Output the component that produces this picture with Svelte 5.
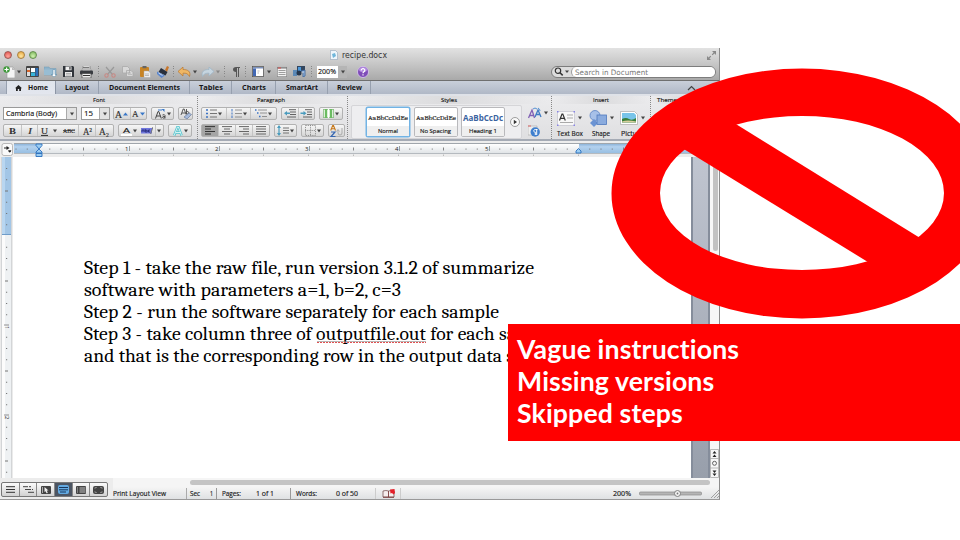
<script>
  // name: [width, height, svg markup]
  const icons = {
    newdoc: [12, 12, '<path d="M4 1h6l2 3v8H4z" fill="#f4f4f4" stroke="#999" stroke-width=".6"/><path d="M9 1v3h3" fill="#bbb"/><circle cx="3.6" cy="3.5" r="3.2" fill="#3f9a3a"/><path d="M1.5 3.5h4.2M3.6 1.4v4.2" stroke="#fff" stroke-width="1.2"/>'],
    caret: [4, 4, '<path d="M0 .6h4L2 3.6z" fill="#444"/>'],
    caretl: [4, 4, '<path d="M0 .6h4L2 3.6z" fill="#888"/>'],
    template: [13, 11, '<rect width="13" height="11" rx="1" fill="#444"/><rect x="1" y="2" width="3" height="8" fill="#ddd"/><rect x="5" y="2" width="4" height="4" fill="#fff"/><rect x="9.4" y="2" width="2.8" height="8" fill="#2d6fb8"/><rect x="5" y="6.5" width="4" height="3.5" fill="#37b4da"/><rect x="1" y="4" width="3" height="2" fill="#d9672e"/>'],
    open: [13, 11, '<path d="M0 1h5l1 1.5h6V9H0z" fill="#8fb4cb" stroke="#6f98b2" stroke-width=".5"/><path d="M0 3.5h12V9H0z" fill="#98bdd3"/><path d="M9 3.5v5H7l3 2.5 3-2.5h-2v-5z" fill="#fff" stroke="#5d8bab" stroke-width=".6"/>'],
    save: [11, 11, '<path d="M0 0h10l1 1v10H0z" fill="#30343a"/><rect x="2.5" y=".5" width="6" height="3.7" fill="#f0f0f0"/><rect x="6.3" y="1" width="1.3" height="2.6" fill="#444"/><rect x="2" y="6" width="7" height="4.5" fill="#e8e8e8"/><path d="M3 7.5h5M3 9h5" stroke="#888" stroke-width=".6"/>'],
    print: [13, 12, '<path d="M3 0h7l1 5H2z" fill="#fff" stroke="#777" stroke-width=".6"/><path d="M3 1.5h6.500M3 3h7" stroke="#555" stroke-width=".8"/><rect y="4.500" width="13" height="4" rx="1" fill="#383b40"/><path d="M2 7.500h9V12H2z" fill="#eee" stroke="#444" stroke-width=".7"/><path d="M3 9.500h7" stroke="#333"/>'],
    cut: [12, 12, '<path d="M2 1l6.500 7.500M10 1L3.500 8.500" stroke="#999" stroke-width="1.2"/><circle cx="2.5" cy="9.5" r="1.7" fill="none" stroke="#c88984" stroke-width="1.1"/><circle cx="9.5" cy="9.500" r="1.7" fill="none" stroke="#c88984" stroke-width="1.1"/>'],
    copy: [12, 11, '<path d="M.5.5h5l2 2V7h-7zM4.500 4.500h4.500l2 2v4H4.500z" fill="#d8d8d8" stroke="#aaa" stroke-width=".8"/><path d="M6 7h3M6 8.500h4" stroke="#aaa" stroke-width=".6"/>'],
    paste: [11, 12, '<rect y="1" width="9" height="10" rx="1" fill="#c88425"/><rect x="2.500" width="4" height="2.200" fill="#666"/><path d="M4 5h4.500l2 2v4.500H4z" fill="#eee" stroke="#aaa" stroke-width=".5"/><path d="M5 8h4M5 9.500h4" stroke="#999" stroke-width=".6"/>'],
    brush: [12, 12, '<path d="M8 4l2-4 2 1-2 5z" fill="#c7762b"/><path d="M4 2l6.500 4-2 3.500-7-3.500z" fill="#29303d"/><path d="M0 5.500l8 4-3.500 2.500L0 8z" fill="#5b86cc"/><path d="M1.500 7l4 2.500" stroke="#d8e5fb" stroke-width=".9"/>'],
    undo: [13, 10, '<path d="M0 4.500L5 0v2.500c5 0 8 2 6.500 7C10 6.500 8 6 5 6.200V9z" fill="#efb765" stroke="#b9772e" stroke-width=".7"/>'],
    redo: [13, 10, '<path d="M13 4.500L8 0v2.500c-5 0-8 2-6.500 7C3 6.500 5 6 8 6.200V9z" fill="#c6d5df" stroke="#9fb6c6" stroke-width=".8"/>'],
    pilcrow: [7, 10, '<path d="M3 0h4v1H6v9H5V1H4v9H3V5C-1 5-1 0 3 0z" fill="#555"/>'],
    sidebar: [12, 11, '<rect x=".4" y=".4" width="11.200" height="10.200" fill="#fff" stroke="#555" stroke-width=".8"/><path d="M1 1h10v1.500H1z" fill="#7e92ba"/><path d="M1 2.500h3V10H1z" fill="#4268b4"/><path d="M5.500 5h2M5.500 7h1.500" stroke="#bbb"/>'],
    toolbox: [10, 11, '<rect x=".3" y="1.300" width="9.400" height="9.400" fill="#f2f2f2" stroke="#888" stroke-width=".7"/><path d="M0 2h10" stroke="#777"/><path d="M1.500 4.500h7M1.500 6.500h7M1.500 8.500h7" stroke="#888" stroke-width=".8"/><path d="M1 2h3" stroke="#d44"/>'],
    gallery: [13, 11, '<path d="M0 4h4v6H0z" fill="#5b89b7"/><path d="M4 0h8v6H4z" fill="#33465e"/><path d="M5 1h3v4H5z" fill="#4d98d9"/><circle cx="6" cy="7" r="2.500" fill="#27374d"/><path d="M8 5l4-1v6l-2 1V7" fill="#9db9dc" stroke="#335f9a" stroke-width=".8"/>'],
    help: [12, 12, '<circle cx="6" cy="6" r="5.500" fill="#7e4bb8" stroke="#dccdf0" stroke-width=".8"/><ellipse cx="6" cy="3.600" rx="4" ry="2.600" fill="#b28ae0"/><path d="M4.200 4.500C4.200 2 8 2.200 7.800 4.500 7.500 5.800 6 5.700 6 7.200M6 8.300v1.200" stroke="#fff" fill="none" stroke-width="1.200"/>'],
    house: [7, 6, '<path d="M3.500 0L7 3.300H6V6H4.200V4H2.800v2H1V3.300H0z" fill="#222"/>'],
    grow: [5, 4, '<path d="M0 3.500L2.500.5 5 3.500z" fill="#3a78c8"/>'],
    shrink: [5, 4, '<path d="M0 .5L2.500 3.500 5 .5z" fill="#3a78c8"/>'],
    eraser: [12, 11, '<path d="M1 7L3.200 1h1L6 6.500M2 5h3.200M6.500 1v5c3 .5 3-3 .3-2.500" fill="none" stroke="#333" stroke-width=".8"/><path d="M4 9l5-4 2.500 1.500L7 11z" fill="#a7bbdc" stroke="#5d6f92" stroke-width=".6"/>'],
    case: [11, 10, '<path d="M.5 9.500L3 2.500h.8L6.300 9.500M1.500 7h3.800" fill="none" stroke="#444" stroke-width="1"/><path d="M7.500 6q2.300-1 2.500.5v3M10 7.500q-2.800-.2-2.500 1.100.8 1.200 2.500 0" fill="none" stroke="#444" stroke-width=".9"/><path d="M3 1h4" fill="none" stroke="#3a78c8" stroke-width="1"/><path d="M6.500 0h3v3z" fill="#3a78c8"/>'],
    highlight: [12, 8, '<rect y="1" width="11" height="5.500" fill="#7077dd"/><path d="M1 5V3h2v2M4.200 2v3h2V3.300h-2M9 3H7.500v2H9" stroke="#20246e" fill="none" stroke-width=".8"/><path d="M9.500 7L12 0" stroke="#777" stroke-width="1"/>'],
    glow: [10, 10, '<path d="M1.200 9.500L4.400 1h1l3.200 8.500M2.800 6.500h4.400" stroke="#50c3cc" stroke-width="2.400" fill="none"/><path d="M1.200 9.500L4.400 1h1l3.200 8.500M2.800 6.500h4.400" stroke="#f4ffff" stroke-width=".8" fill="none"/>'],
    bullets: [11, 9, '<path d="M0 1h2M0 4.500h2M0 8h2" stroke="#3d73c4" stroke-width="1.500"/><path d="M4 1h7M4 4.500h7M4 8h7" stroke="#666" stroke-width=".9"/>'],
    numbers: [11, 9, '<path d="M1 0v2.500M1 3.500v2M1 6.500v2.500" stroke="#3d73c4"/><path d="M4 1h7M4 4.500h7M4 8h7" stroke="#888" stroke-width=".9"/>'],
    multi: [12, 9, '<path d="M0 1h1.500M2 4h1.500M4 7.500h1.500" stroke="#3d73c4" stroke-width="1.500"/><path d="M3 1h9M5 4h7M7 7.500h5" stroke="#888" stroke-width=".9"/>'],
    outdent: [12, 9, '<path d="M5 .7h7M6 3h6M6 5.500h6M3 8h9" stroke="#555" stroke-width=".9"/><path d="M0 4.300L3 2v1.500h3v1.600H3v1.500z" fill="#4a9bbd"/>'],
    indent: [12, 9, '<path d="M5 .7h7M7 3h5M7 5.500h5M3 8h9" stroke="#555" stroke-width=".9"/><path d="M6.500 4.300L3.500 2v1.500h-3v1.600h3v1.500z" fill="#4a9bbd"/>'],
    columns: [11, 9, '<rect x=".4" y=".4" width="10.200" height="8.200" fill="#eaf6e7" stroke="#8bbd86" stroke-width=".8"/><path d="M3 0v9M8 0v9" stroke="#6cbc62" stroke-width="2.200"/><path d="M5.500 0v9" stroke="#fff"/>'],
    left: [10, 9, '<path d="M0 .6h10M0 3h6M0 5.500h10M0 8h6" stroke="#333" stroke-width="1"/>'],
    center: [10, 9, '<path d="M0 .6h10M2 3h6M0 5.500h10M2 8h6" stroke="#666" stroke-width="1"/>'],
    right: [10, 9, '<path d="M0 .6h10M4 3h6M0 5.500h10M4 8h6" stroke="#666" stroke-width="1"/>'],
    justify: [10, 9, '<path d="M0 .6h10M0 3h10M0 5.500h10M0 8h10" stroke="#666" stroke-width="1"/>'],
    spacing: [12, 11, '<path d="M2 1v9" stroke="#4a9bbd" stroke-width="1.200"/><path d="M0 3l2-3 2 3zM0 8l2 3 2-3z" fill="#4a9bbd"/><path d="M6 3h6M6 5.500h6M6 8h6" stroke="#666" stroke-width=".9"/>'],
    borders: [11, 11, '<path d="M.5.5h10v10H.5zM5.500 0v11M0 5.500h11" fill="none" stroke="#888" stroke-width=".9" stroke-dasharray="1.200 1"/>'],
    sort: [13, 12, '<path d="M.7 5.500L2.800.3h.6L5.500 5.500M1.500 3.800H4.800" fill="none" stroke="#c77819" stroke-width="1.100"/><path d="M1 7h4L1 11.500h4.500" fill="none" stroke="#3565b0" stroke-width="1.200"/><path d="M8 5v3a2 2 0 004 0V3M6.500 6.500L8 4.500 9.500 6.500" fill="none" stroke="#aaa" stroke-width="1"/>'],
    play: [10, 10, '<circle cx="5" cy="5" r="4.500" fill="#fafafa" stroke="#888" stroke-width=".8"/><path d="M3.800 2.800L7 5 3.800 7.200z" fill="#333"/>'],
    aa: [14, 12, '<path d="M.5 11L4 3l2.500 8M2 8.500h4" stroke="#8161b5" stroke-width="1.300" fill="none"/><path d="M7 10l3-7 3 7M8 7.500h4" stroke="#3f7cc4" stroke-width="1.300" fill="none"/><path d="M5 2q2-2 4 0M10 1q2 1 2 3" stroke="#5492d4" fill="none"/>'],
    stylepane: [12, 12, '<path d="M0 1h9v9H0z" fill="#eee" stroke="#aaa" stroke-width=".6"/><path d="M0 1h3" stroke="#d66" stroke-width="1"/><circle cx="7.200" cy="7" r="4.700" fill="#3f7fce"/><path d="M9.500 4.500H7.300C5.200 4.500 5.200 7.200 7.300 7.200V10M8.700 4.500V10" stroke="#fff" stroke-width="1" fill="none"/>'],
    textbox: [18, 15, '<rect x=".5" y=".5" width="17" height="14" fill="#f8f8f8" stroke="#c4c4cc" stroke-width=".7"/><path d="M2.500 9.500L5 3h.8l2.500 6.500M3.500 7.300h4" fill="none" stroke="#333" stroke-width="1.200"/><path d="M10 4h6M10 7h6M3 11.500h13" stroke="#aaa" stroke-width="1"/><path d="M0 0h1.500v1.500H0zM16.500 0H18v1.500h-1.500zM0 13.500h1.500V15H0zM16.500 13.500H18V15h-1.500z" fill="#8a85e8"/>'],
    shape: [18, 17, '<circle cx="6" cy="5.500" r="5" fill="#a7c0e8" stroke="#5c83c4" stroke-width=".8"/><path d="M5 9l4 4-4 4-4-4z" fill="#6b93d3"/><rect x="8" y="5" width="9.500" height="9.500" fill="#8aabde" stroke="#4f79be" stroke-width=".8"/>'],
    picture: [18, 14, '<path d="M.5.5h14l3 3v10H.5z" fill="#fff" stroke="#aaa" stroke-width=".7"/><path d="M2 2h12l2 2v7.500H2z" fill="#78c4e9"/><path d="M2 8q4-2 7 0t7-1v4.500H2z" fill="#3a7f3b"/><path d="M2 10.500q5-2 14 0v1H2z" fill="#d9cf9d"/>'],
    outline: [11, 7, '<path d="M0 .7h5M2 3.500h6M5 6.300h6M6 .7h2M9 3.500h1" stroke="#444" stroke-width="1"/>'],
    draft: [9, 7, '<path d="M0 .7h9M0 3.500h9M0 6.300h9" stroke="#333" stroke-width="1"/>'],
    publish: [10, 8, '<rect width="10" height="8" rx="1" fill="#444"/><path d="M3.500 1l4 3.500H5.800L6.800 7 5.500 7.300 4.700 5.200 3.500 6z" fill="#eee"/><path d="M1.500 1v6" stroke="#aaa"/>'],
    printview: [11, 9, '<rect width="11" height="9" rx="2" fill="#63aae2"/><path d="M1 2.500h9M1 4.800h9M2 7h6" stroke="#17375e" stroke-width="1"/>'],
    notebook: [10, 8, '<rect width="10" height="8" rx="1" fill="#444"/><path d="M3.500 2h6M3.500 4h6M3.500 6h6M1 2h1M1 4h1M1 6h1" stroke="#ddd" stroke-width=".8"/>'],
    full: [11, 8, '<rect width="11" height="8" rx="2" fill="#444"/><path d="M2 3V1.500h2M9 3V1.500H7M2 5v1.500h2M9 5v1.500H7" stroke="#bbb" fill="none" stroke-width=".5"/>'],
    book: [13, 9, '<path d="M1 2q3-1 5.500 0Q9 1 12 2v6H1z" fill="#f6eeee" stroke="#7a5454" stroke-width=".8"/><path d="M6.500 2v6M1 8.300h11" stroke="#7a3a3a" stroke-width=".9"/><path d="M8 .5l4.500-.5.5 4-1.500 1.500-1.500-1.500-1.500.5z" fill="#e3202a"/>'],
    search: [16, 9, '<circle cx="4" cy="3.700" r="2.700" fill="none" stroke="#333" stroke-width="1.200"/><path d="M6 5.700l2.700 2.700" stroke="#333" stroke-width="1.500"/><path d="M11 3.500h4L13 6z" fill="#444"/>'],
    expand: [9, 9, '<path d="M5 0h4v4zM0 5v4h4z" fill="#888"/><path d="M8 1L5.200 3.800M1 8l2.800-2.800" stroke="#888" stroke-width="1.200"/>'],
    docfile: [8, 10, '<path d="M.4.4h5l2.200 2.200v7H.4z" fill="#eef6fb" stroke="#9ab" stroke-width=".7"/><path d="M2 4l3-1 1 3-3 2z" fill="#6fb6da"/>']
  };

  // gap before the item, then what it is
  const toolbar = [
    [3, 'newdoc'], [2, 'caret'], [5, 'template'], [5, 'open'], [6, 'save'], [6, 'print'], [5, '|'],
    [4, 'cut'], [6, 'copy'], [6, 'paste'], [6, 'brush'], [4, '|'], [3, 'undo'], [2, 'caret'],
    [4, 'redo'], [2, 'caretl'], [4, '|'], [7, 'pilcrow'], [5, '|'], [5, 'sidebar'], [3, 'caret'],
    [6, 'toolbox'], [6, 'gallery'], [5, '|']
  ];
  const tabs = [
    ['Layout', 43, 24], ['Document Elements', 91, 71], ['Tables', 42, 24],
    ['Charts', 44, 24], ['SmartArt', 52, 32], ['Review', 43, 25]
  ];
  const steps = [
    ['Step 1 - take the raw file, run version 3.1.2 of summarize', 450],
    ['software with parameters a=1, b=2, c=3', 317],
    ['Step 2 - run the software separately for each sample', 415],
    ['Step 3 - take column three of outputfile.out for each sample', 472],
    ['and that is the corresponding row in the output data set', 445]
  ];
  const notes = ['Vague instructions', 'Missing versions', 'Skipped steps'];
  const views = ['draft', 'outline', 'publish', 'printview', 'notebook', 'full'];
  const ticks = Array.from({ length: 58 }, (_, i) => i - 2);
  const vticks = Array.from({ length: 29 }, (_, i) => i - 6);
</script>

{#snippet ic(name)}
  <svg class="ic" width={icons[name][0]} height={icons[name][1]} viewBox="0 0 {icons[name][0]} {icons[name][1]}">{@html icons[name][2]}</svg>
{/snippet}

{#snippet t(text, w, size = 7, cls = '')}
  <svg class="t {cls}" width={w} height={size + 2}><text x="0" y={size} font-size={size} textLength={w} lengthAdjust="spacingAndGlyphs">{text}</text></svg>
{/snippet}

<main>
  <section class="window">
    <header>
      <div class="title">
        <i class="light red"></i><i class="light amber"></i><i class="light green"></i>
        <span class="name">{@render ic('docfile')}{@render t('recipe.docx', 45, 8, 'grey')}</span>
        <span class="expand">{@render ic('expand')}</span>
      </div>
      <div class="tools">
        {#each toolbar as [gap, name]}
          <span class="tool" style="margin-left:{gap}px">
            {#if name === '|'}<i class="dots"></i>{:else}{@render ic(name)}{/if}
          </span>
        {/each}
        <span class="zoom"><b>{@render t('200%', 18, 7)}</b><span>{@render ic('caret')}</span></span>
        <span class="help">{@render ic('help')}</span>
        <span class="search">{@render ic('search')}<span class="field">{@render t('Search in Document', 73, 7.5, 'soft')}</span></span>
      </div>
    </header>

    <nav>
      <span class="home">{@render ic('house')}{@render t('Home', 20, 7, 'bold')}</span>
      {#each tabs as [label, w, tw]}
        <span class="tab" style="width:{w}px">{@render t(label, tw, 7, 'bold')}</span>
      {/each}
      <svg class="chev" width="10" height="6"><path d="M1 5l3.500-3.500L8 5" fill="none" stroke="#444" stroke-width="1.200" /></svg>
    </nav>

    <div class="ribbon">
      <div class="group font">
        <div class="gtitle">{@render t('Font', 12, 6)}</div>
        <div class="row">
          <span class="combo face"><b>{@render t('Cambria (Body)', 51, 7)}</b><span>{@render ic('caret')}</span></span>
          <span class="combo size"><b>{@render t('15', 9, 7)}</b><span>{@render ic('caret')}</span></span>
          <span class="btns w34"><span>{@render t('A', 7, 10, 'serif')}{@render ic('grow')}</span><span class="sep">{@render t('A', 6.5, 9, 'serif')}{@render ic('shrink')}</span></span>
          <span class="btns w23"><span>{@render ic('case')}{@render ic('caret')}</span></span>
          <span class="btns w14"><span>{@render ic('eraser')}</span></span>
        </div>
        <div class="row">
          <span class="btns w110">
            <span class="c17">{@render t('B', 7, 9, 'serif bold')}</span>
            <span class="c16 sep">{@render t('I', 4, 9, 'serif ital')}</span>
            <span class="c23 u sep">{@render t('U', 7, 9, 'serif under')}{@render ic('caret')}</span>
            <span class="c18">{@render t('ABC', 12, 6.5, 'serif strike')}</span>
            <span class="c17 sep">{@render t('A²', 9, 10, 'serif')}</span>
            <span class="c17 sep">{@render t('A₂', 10, 10, 'serif')}</span>
          </span>
          <span class="btns w46"><span class="swatch">{@render t('A', 7, 8)}</span><span>{@render ic('caret')}</span><span>{@render ic('highlight')}</span><span class="sep">{@render ic('caret')}</span></span>
          <span class="btns w24"><span>{@render ic('glow')}{@render ic('caret')}</span></span>
        </div>
      </div>

      <div class="group para">
        <div class="gtitle">{@render t('Paragraph', 28, 6)}</div>
        <div class="row">
          <span class="btns w76"><span>{@render ic('bullets')}{@render ic('caret')}</span><span class="sep">{@render ic('numbers')}{@render ic('caret')}</span><span class="sep">{@render ic('multi')}{@render ic('caret')}</span></span>
          <span class="btns w34"><span>{@render ic('outdent')}</span><span class="sep">{@render ic('indent')}</span></span>
          <span class="btns w24"><span>{@render ic('columns')}{@render ic('caret')}</span></span>
        </div>
        <div class="row">
          <span class="btns w69"><span class="on">{@render ic('left')}</span><span class="sep">{@render ic('center')}</span><span class="sep">{@render ic('right')}</span><span class="sep">{@render ic('justify')}</span></span>
          <span class="btns w23"><span>{@render ic('spacing')}{@render ic('caret')}</span></span>
          <span class="btns w23"><span>{@render ic('borders')}{@render ic('caret')}</span></span>
          <span class="btns w17"><span>{@render ic('sort')}</span></span>
        </div>
      </div>

      <div class="group styles">
        <div class="gtitle">{@render t('Styles', 16, 6)}</div>
        <div class="stylerow">
          <div class="gallery">
            <div class="cell sel"><b>{@render t('AaBbCcDdEe', 40, 7, 'cambria')}</b><span>{@render t('Normal', 20, 6)}</span></div>
            <div class="cell"><b>{@render t('AaBbCcDdEe', 40, 7, 'cambria')}</b><span>{@render t('No Spacing', 31, 6)}</span></div>
            <div class="cell h"><b>{@render t('AaBbCcDc', 40, 8.5, 'blue bold')}</b><span>{@render t('Heading 1', 28, 6)}</span></div>
            {@render ic('play')}
          </div>
          <div class="side"><span>{@render ic('aa')}{@render ic('caret')}</span>{@render ic('stylepane')}</div>
        </div>
      </div>

      <div class="group insert">
        <div class="gtitle">{@render t('Insert', 16, 6)}</div>
        <div class="bigs">
          <div class="big"><span>{@render ic('textbox')}{@render ic('caret')}</span>{@render t('Text Box', 26, 6.5)}</div>
          <div class="big"><span>{@render ic('shape')}{@render ic('caret')}</span>{@render t('Shape', 18, 6.5)}</div>
          <div class="big"><span>{@render ic('picture')}{@render ic('caret')}</span>{@render t('Picture', 23, 6.5)}</div>
        </div>
      </div>
      <div class="group themes"><div class="gtitle">{@render t('Themes', 23, 6)}</div></div>
    </div>

    <svg class="ruler" width="719" height="16">
      <defs>
        <linearGradient id="rb" x2="0" y2="1"><stop stop-color="#8db4da" /><stop offset=".3" stop-color="#b3d1ee" /><stop offset="1" stop-color="#98bfe2" /></linearGradient>
        <linearGradient id="rw" x2="0" y2="1"><stop stop-color="#fff" /><stop offset="1" stop-color="#dfe3e6" /></linearGradient>
      </defs>
      <rect width="719" height="16" fill="#ededed" />
      <rect x="14" y="3" width="678" height="9.500" fill="url(#rw)" />
      <path d="M14 2.500h678" stroke="#a0a6ac" /><path d="M14 12.500h678" stroke="#b5babf" />
      <rect x="14" y="3" width="25" height="9" fill="url(#rb)" />
      <rect x="579" y="3" width="112" height="9" fill="url(#rb)" />
      {#each ticks as i}
        {#if i % 8 === 0 && i > 0 && i < 48}
          <text x={35 + i * 11.25} y="10" font-size="6">{i / 8}</text>
          <path d="M{39.500 + i * 11.25} 5v5" stroke="#777" stroke-width=".7" />
        {:else if i !== 0 && i !== 48}
          <path d="M{38.500 + i * 11.25} {i % 4 ? 7.500 : 6.500}v{i % 4 ? 1.200 : 3}" stroke="#777" stroke-width=".9" />
        {/if}
        {#if i > 0 && i % 4 === 0}<path d="M{38.500 + i * 11.25} 13.500v1.500" stroke="#bbb" />{/if}
      {/each}
      <rect x="2" y="2.500" width="10.500" height="12" rx="2" fill="#fafafa" stroke="#aaa" stroke-width=".8" />
      <path d="M4 7h4M8.500 10h2.500" fill="none" stroke="#222" stroke-width="1" /><path d="M6.500 5l3 2-3 2zM8 9.500h3.500l-1.700 2.200z" fill="#222" />
      <path d="M36 3h6v1.500L39 8l-3-3.500zM36 11L39 8l3 3v1h-6zM36 12.500h6v3h-6z" fill="#9bcdf3" stroke="#2b6fbd" stroke-width=".9" />
      <path d="M576 12V10L578.500 7.500 581 10v2z" fill="#9bcdf3" stroke="#2b6fbd" stroke-width=".9" />
    </svg>

    <div class="body">
      <svg class="vruler" width="13" height="321">
        <rect width="13" height="321" fill="#ebebeb" />
        <rect x="2" width="9" height="321" fill="#eef1f3" /><rect x="2" width="3" height="321" fill="#fcfcfc" />
        <rect x="2" width="9" height="77" fill="#a3c6e6" /><rect x="2" width="3" height="77" fill="#b9d6f0" />
        <path d="M2 77.500h9" stroke="#6e9cc9" /><path d="M1.500 0v321M11.500 0v321" stroke="#c2c6ca" stroke-width=".6" />
        {#each vticks as i}
          {#if i % 8 === 0 && i > 0}
            <text transform="translate(4.500 {79 + i * 11.25}) rotate(90)" font-size="6">{i / 8}</text>
            <path d="M4 {78 + i * 11.25}h5" stroke="#777" stroke-width=".8" />
          {:else if i !== 0}
            <path d="M{i % 4 ? 6 : 5} {79 + i * 11.25}h{i % 4 ? 1.200 : 3}" stroke="#777" stroke-width="1" />
          {/if}
        {/each}
      </svg>
      <article>
        {#each steps as [line, w], i}
          <div class="line">
            <svg width={w} height="22"><text x="0" y="17" font-size="19.5" textLength={w} lengthAdjust="spacingAndGlyphs">{line}</text>
              {#if i === 3}<path d="M233 19.500h109" stroke="#e05050" stroke-width="1.200" stroke-dasharray="2 1" /><path d="M233 18.500h109" stroke="#888" stroke-width=".6" />{/if}
            </svg>
          </div>
        {/each}
      </article>
      <div class="desk"></div>
      <div class="vscroll">
        <i class="thumb"></i>
        <svg class="nav" width="9" height="29"><path d="M.5.5h8v28h-8zM0 9.500h9M0 19h9" fill="#f6f6f6" stroke="#aaa" stroke-width=".8" /><path d="M2.500 4.500l2-2.500 2 2.500zM2.500 8l2-2.500 2 2.500zM2.500 21.500l2 2.500 2-2.500zM2.500 24.500l2 2.500 2-2.500z" fill="#222" /><circle cx="4.500" cy="14.300" r="2" fill="none" stroke="#555" stroke-width=".9" /></svg>
      </div>
    </div>

    <footer>
      <div class="views">
        {#each views as v}<span class:active={v === 'printview'}>{@render ic(v)}</span>{/each}
      </div>
      <div class="bottom">
        <div class="hscroll"><i></i></div>
        <div class="status">
          <span class="s1">{@render t('Print Layout View', 53, 6.5)}</span>
          <span class="s2">{@render t('Sec', 10, 6.5)}{@render t('1', 3, 6.5)}</span>
          <span class="s3">{@render t('Pages:', 19, 6.5)}{@render t('1 of 1', 18, 6.5)}</span>
          <span class="s4">{@render t('Words:', 21, 6.5)}{@render t('0 of 50', 22, 6.5)}</span>
          <span class="s5">{@render ic('book')}</span>
          <span class="s6">{@render t('200%', 18, 6.5)}
            <svg width="63" height="9"><rect x=".5" y="3" width="62" height="3" rx="1" fill="#b5b5b5" stroke="#8b8b8b" stroke-width=".7" /><circle cx="38.500" cy="4.500" r="3" fill="#f3f3f3" stroke="#777" stroke-width=".9" /><circle cx="38.500" cy="4.500" r=".9" fill="#777" /></svg>
            <svg width="9" height="9"><path d="M1 9l8-8M4 9l5-5M7 9l2-2" stroke="#999" stroke-width=".9" /></svg>
          </span>
        </div>
      </div>
    </footer>
  </section>

  <svg class="ban" width="960" height="540">
    <path fill="#f00" fill-rule="evenodd" d="M611.500 193.500a190.500 125 0 10381 0a190.500 125 0 10-381 0zM660 193a142 77 0 11284 0a142 77 0 11-284 0z" />
    <path fill="#f00" d="M724.500 117L937.500 248.700 880 269.400 667 138.700z" />
  </svg>

  <aside>
    {#each notes as note}<p>{note}</p>{/each}
  </aside>
</main>

<style>
  :global(body) { margin: 0; background: #fff; }
  main { position: relative; width: 960px; height: 540px; overflow: hidden; background: #fff; box-sizing: border-box; padding-top: 48px; font-family: 'DejaVu Sans', sans-serif; }
  svg { display: block; flex: none; }
  b { font-weight: 400; }
  .t { overflow: visible; fill: #161616; font-family: 'Open Sans', 'Noto Sans', sans-serif; stroke: #161616; stroke-width: .15px; }
  .t.bold { font-weight: 700; stroke: none; }
  .t.grey { fill: #333; stroke: none; font-family: 'DejaVu Sans', sans-serif; }
  .t.soft { fill: #777; stroke: none; font-family: 'DejaVu Sans', sans-serif; }
  .t.serif { font-family: 'Liberation Serif', serif; fill: #333; }
  .t.cambria { font-family: Cambria, Caladea, 'Liberation Serif', serif; fill: #333; }
  .t.blue { fill: #3b639f; }
  .ital { font-style: italic; }
  .under { text-decoration: underline; }
  .strike { text-decoration: line-through; }
  .window { width: 720px; height: 452px; display: flex; flex-direction: column; box-sizing: border-box; border-right: 1px solid #8c8c8c; border-bottom: 1px solid #999; overflow: hidden; }

  header { height: 33px; box-sizing: border-box; flex: none; background: linear-gradient(#e2e2e2, #c9c9c9 45%, #a9a9a9); border-bottom: 1px solid #6f6f6f; }
  .title { height: 14px; display: flex; align-items: center; padding-left: 4px; }
  .light { width: 8px; height: 8px; border-radius: 50%; margin-right: 4.5px; box-sizing: border-box; border: 1px solid #9c5a55; }
  .red { background: radial-gradient(circle at 50% 70%, #ffa59c, #de4b45); }
  .amber { background: radial-gradient(circle at 50% 70%, #ffe6a0, #e5a034); border-color: #a98142; }
  .green { background: radial-gradient(circle at 50% 70%, #d0f0b0, #75b355); border-color: #65904f; }
  .name { display: flex; align-items: center; gap: 4px; margin-left: 288.5px; }
  .expand { margin-left: auto; padding-right: 3px; }
  .tools { height: 19px; display: flex; align-items: center; }
  .tool { display: flex; }
  .dots { width: 1px; height: 12px; margin-right: 1px; background: repeating-linear-gradient(#888 0 1px, transparent 1px 2.5px); }
  .zoom { display: flex; align-items: center; width: 30px; height: 12px; margin-left: 4px; background: #fff; }
  .zoom b { width: 20px; padding-left: 1px; }
  .zoom span { width: 9px; height: 12px; background: #b5b5b5; display: flex; align-items: center; justify-content: center; }
  .help { margin-left: 10px; }
  .search { margin-left: auto; margin-right: 3px; width: 165px; height: 12px; box-sizing: border-box; border: 1px solid #7d7d7d; border-radius: 6px; display: flex; align-items: center; background: #ddd; padding-left: 2px; }
  .field { flex: 1; height: 10px; margin-left: 1px; padding-left: 3px; border-radius: 5px; background: #fff; display: flex; align-items: center; border-left: 1px solid #999; }

  nav { height: 13px; flex: none; display: flex; align-items: center; background: linear-gradient(#c9cfda, #b0b8c6); border-bottom: 2px solid #dfe2e8; padding-left: 6px; }
  .home { width: 50px; height: 13px; display: flex; align-items: center; gap: 6px; padding-left: 8px; box-sizing: border-box; background: linear-gradient(#dfe4ec, #e3e6ee); border-left: 1px solid #97a0af; border-right: 1px solid #8c95a5; }
  .tab { height: 13px; display: flex; align-items: center; justify-content: center; box-sizing: border-box; border-right: 1px solid #97a0af; }
  .chev { margin-left: auto; margin-right: 22px; }

  .ribbon { height: 43px; flex: none; display: flex; background: linear-gradient(#ececee, #dfdfe1); border-bottom: 2px solid #a5abb5; }
  .group { box-sizing: border-box; border-right: 1px dotted #888; }
  .gtitle { height: 8px; display: flex; justify-content: center; align-items: center; margin-bottom: 3px; background: linear-gradient(90deg, transparent, #dcdcde 50%, transparent); }
  .font { width: 198px; padding-left: 3px; }
  .font .gtitle { width: 191px; }
  .para { width: 150px; padding-left: 3px; }
  .para .gtitle { width: 140px; }
  .styles { width: 204px; }
  .styles .gtitle { margin: 0 0 1px; width: 201px; }
  .insert { width: 99px; }
  .themes { flex: 1; border: none; }
  .themes .gtitle { justify-content: flex-start; padding-left: 6px; }
  .row { display: flex; gap: 4px; height: 13px; margin-bottom: 4px; }
  .combo { display: flex; align-items: center; box-sizing: border-box; border: 1px solid #9a9a9a; background: #fff; }
  .combo b { flex: 1; padding-left: 1.5px; }
  .combo > span { width: 9px; height: 11px; background: #e2e2e2; border-left: 1px solid #aaa; display: flex; align-items: center; justify-content: center; }
  .face { width: 74px; }
  .size { width: 29px; margin-right: -1px; }
  .btns { display: flex; box-sizing: border-box; border: 1px solid #b2b2b2; border-radius: 2px; background: linear-gradient(#f6f6f6, #d5d5d5); }
  .btns > span { flex: 1 0 auto; display: flex; align-items: center; justify-content: center; gap: 1px; box-sizing: border-box; }
  .btns .sep { border-left: 1px solid #c4c4c4; }
  .btns .u { gap: 5px; }
  .btns .on { background: #a5a5a5; }
  .btns > .c16 { flex: 0 0 16px; } .btns > .c17 { flex: 0 0 17px; } .btns > .c18 { flex: 0 0 18px; } .btns > .c23 { flex: 0 0 23px; }
  .btns > .swatch { height: 11px; margin-left: 2px; border-bottom: 2px solid #fff; }
  .w110 { width: 111px; } .w76 { width: 76px; } .w69 { width: 69px; } .w46 { width: 46px; }
  .w34 { width: 34px; } .w24 { width: 24px; } .w23 { width: 23px; } .w17 { width: 17px; } .w14 { width: 15px; }
  .stylerow { display: flex; }
  .gallery { width: 171px; height: 34px; margin-left: 3px; box-sizing: border-box; padding-left: 14px; display: flex; align-items: center; gap: 3.5px; background: #eeeef0; border: 1px solid #d5d5d8; border-radius: 2px; }
  .gallery > .ic { margin-left: 1px; }
  .cell { width: 44px; height: 30px; box-sizing: border-box; border: 1px solid #b9b9bc; border-radius: 2px; background: #fff; display: flex; flex-direction: column; }
  .cell.sel { border-color: #72b3e4; box-shadow: 0 0 0 .5px #72b3e4; }
  .cell b { height: 18px; display: flex; align-items: center; justify-content: center; }
  .cell span { flex: 1; display: flex; justify-content: center; align-items: center; background: #efefef; }
  .side { display: flex; flex-direction: column; gap: 6px; padding: 2px 0 0 6px; }
  .side span { display: flex; align-items: center; gap: 2px; }
  .bigs { display: flex; padding-left: 2px; }
  .big { width: 31.5px; display: flex; flex-direction: column; align-items: center; gap: 0; }
  .big span { height: 22px; display: flex; align-items: center; gap: 3px; }
  .ruler { font-family: 'Open Sans', sans-serif; fill: #222; }
  .vruler { font-family: 'Open Sans', sans-serif; fill: #222; }

  .body { height: 321px; flex: none; display: flex; }
  article { flex: 1; padding: 100px 0 0 71px; background: #fff; overflow: hidden; }
  .line { height: 22px; }
  .line svg { overflow: visible; font-family: Cambria, Caladea, 'Liberation Serif', serif; }
  .desk { width: 19px; box-sizing: border-box; background: linear-gradient(#c0c5d0, #989fab); border-left: 2px solid #858d9b; border-right: 2px solid #858d9b; }
  .vscroll { width: 9px; display: flex; flex-direction: column; justify-content: space-between; background: #f7f7f7; }
  .thumb { width: 5px; height: 94px; margin-left: 3px; border-radius: 3px; background: #c2c2c2; }

  footer { height: 21px; flex: none; display: flex; background: #ececec; }
  .views { width: 107px; height: 15px; margin: 4px 5px 0 1px; box-sizing: border-box; display: flex; border: 1px solid #777; border-radius: 2px; background: linear-gradient(#fbfbfb, #d2d2d2); }
  .views span { flex: 1; display: flex; align-items: center; justify-content: center; border-left: 1px solid #888; }
  .views span:first-child { border: none; }
  .views .active { background: #4c5563; }
  .bottom { flex: 1; }
  .hscroll { height: 9px; padding: 2px 9px 0 77px; box-sizing: border-box; background: #f5f5f5; }
  .hscroll i { display: block; height: 5px; border-radius: 3px; background: #c4c4c4; }
  .status { height: 12px; display: flex; align-items: center; background: linear-gradient(#f5f5f5, #dfe1e3); }
  .status span { display: flex; align-items: center; height: 11px; box-sizing: border-box; }
  .s1 { width: 74px; border-right: 1px solid #aaa; }
  .s2 { width: 30px; padding: 0 3px; justify-content: space-between; border-right: 1px solid #999; }
  .s3 { width: 74px; padding-left: 5px; gap: 15px; border-right: 1px solid #999; }
  .s4 { width: 85px; padding-left: 5px; gap: 19px; border-right: 1px solid #ccc; }
  .s5 { width: 25px; padding-left: 6px; border-right: 1px solid #ccc; }
  .s6 { margin-left: auto; gap: 8px; }

  .ban { position: absolute; left: 0; top: 0; }
  aside { position: absolute; left: 508px; top: 324px; width: 452px; height: 117px; box-sizing: border-box; padding: 9px 0 0 9px; background: #f00; color: #fff; font: 700 26.67px/32px Lato, sans-serif; letter-spacing: .13px; font-variant-ligatures: none; }
  aside p { margin: 0; }
</style>
